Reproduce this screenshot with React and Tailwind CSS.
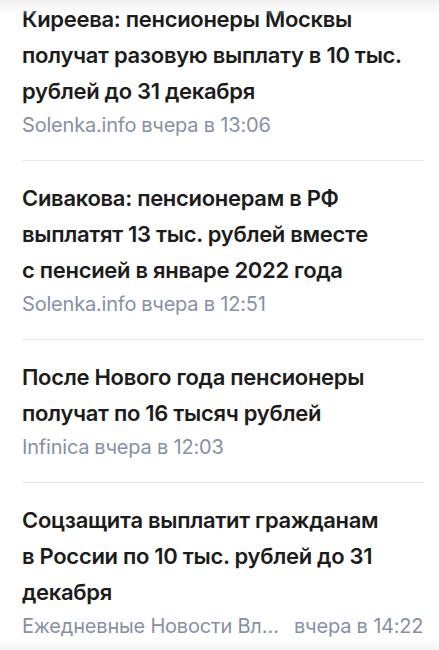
import React from "react";

const news = [
  {
    title: "Киреева: пенсионеры Москвы получат разовую выплату в 10 тыс. рублей до 31 декабря",
    source: "Solenka.info",
    time: "вчера в 13:06",
  },
  {
    title: "Сивакова: пенсионерам в\u00a0РФ выплатят 13 тыс. рублей вместе с\u00a0пенсией в\u00a0январе 2022 года",
    source: "Solenka.info",
    time: "вчера в 12:51",
  },
  {
    title: "После Нового года пенсионеры получат по 16 тысяч рублей",
    source: "Infinica",
    time: "вчера в 12:03",
  },
  {
    title: "Соцзащита выплатит гражданам в\u00a0России по 10 тыс. рублей до 31 декабря",
    source: "Ежедневные Новости Владимир",
    time: "вчера в 14:22",
    long: true,
  },
];

function NewsItem({ item, first }) {
  return (
    <div
      className={
        "pb-[19px] " + (first ? "pt-[1px]" : "pt-[19px] border-t border-[#e6e8ef]")
      }
    >
      <h2 className="text-[22px] leading-[36px] font-semibold text-[#1c1c1c] tracking-[-0.3px]">
        {item.title}
      </h2>
      <div className="flex text-[20px] leading-[32px] text-[#8890a5] tracking-[-0.2px]">
        <span className="truncate max-w-[259px]">{item.source}</span>
        <span className={(item.long ? "ml-[13px]" : "ml-[5px]") + " shrink-0"}>{item.time}</span>
      </div>
    </div>
  );
}

export default function App() {
  return (
    <div
      className="relative w-[439px] h-[650px] overflow-hidden bg-white"
      style={{ fontFamily: "Inter, 'Noto Sans', sans-serif" }}
    >
      <div className="absolute top-0 left-0 right-0 h-[16px] bg-gradient-to-b from-[#f1f1f1] to-white/0" />
      <div className="pl-[22px] pr-[15px]">
        {news.map((item, i) => (
          <NewsItem key={i} item={item} first={i === 0} />
        ))}
      </div>
      <div className="absolute bottom-0 left-0 right-0 h-[12px] bg-gradient-to-b from-white/0 to-[#f5f5f5]" />
    </div>
  );
}
